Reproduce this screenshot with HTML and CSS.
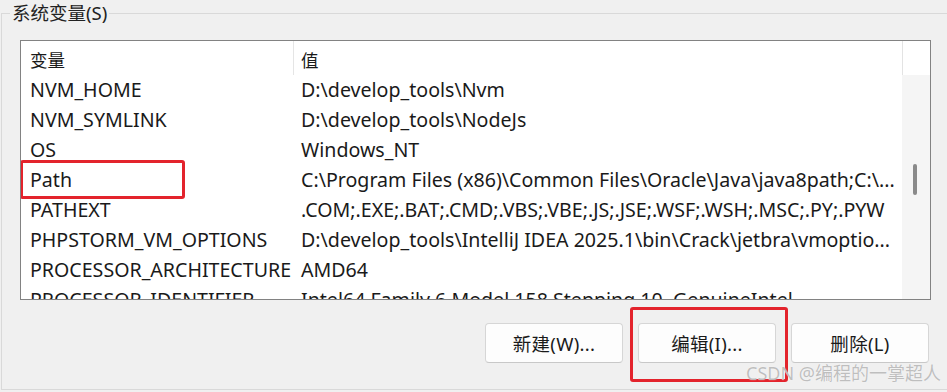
FILE: index.html
```
<!DOCTYPE html>
<html lang="zh-CN">
<head>
    <meta charset="UTF-8">
    <title>系统变量</title>
    <link rel="stylesheet" href="styles.css">
</head>
<body>
    <fieldset class="group">
        <legend>系统变量(S)</legend>

        <div class="listbox">
            <div class="rows">
                <div class="row head">
                    <div class="name">变量</div>
                    <div class="value">值</div>
                </div>
                <div class="row"><div class="name">NVM_HOME</div><div class="value">D:\develop_tools\Nvm</div></div>
                <div class="row"><div class="name">NVM_SYMLINK</div><div class="value">D:\develop_tools\NodeJs</div></div>
                <div class="row"><div class="name">OS</div><div class="value">Windows_NT</div></div>
                <div class="row marked">
                    <div class="name">Path</div>
                    <div class="value">C:\Program Files (x86)\Common Files\Oracle\Java\java8path;C:\...</div>
                    <span class="mark mark-path"></span>
                </div>
                <div class="row"><div class="name">PATHEXT</div><div class="value">.COM;.EXE;.BAT;.CMD;.VBS;.VBE;.JS;.JSE;.WSF;.WSH;.MSC;.PY;.PYW</div></div>
                <div class="row"><div class="name">PHPSTORM_VM_OPTIONS</div><div class="value">D:\develop_tools\IntelliJ IDEA 2025.1\bin\Crack\jetbra\vmoptio...</div></div>
                <div class="row"><div class="name">PROCESSOR_ARCHITECTURE</div><div class="value">AMD64</div></div>
                <div class="row"><div class="name">PROCESSOR_IDENTIFIER</div><div class="value">Intel64 Family 6 Model 158 Stepping 10, GenuineIntel</div></div>
            </div>
            <div class="scrollbar">
                <div class="scroll-head"></div>
                <div class="thumb"></div>
            </div>
        </div>

        <div class="actions">
            <button class="btn">新建(W)...</button>
            <span class="marked">
                <button class="btn">编辑(I)...</button>
                <span class="mark mark-btn"></span>
            </span>
            <button class="btn">删除(L)</button>
        </div>

        <div class="watermark">CSDN @编程的一掌超人</div>
    </fieldset>
</body>
</html>
```

FILE: styles.css
```
html, body {
    margin: 0;
    padding: 0;
    background-color: #f0f0f0;
    overflow: hidden;
}
body {
    font-family: "Noto Sans", "Noto Sans CJK SC", sans-serif;
    color: #1a1a1a;
    width: 947px;
    height: 392px;
}
.group {
    position: relative;
    box-sizing: border-box;
    margin: 0 0 0 1px;
    padding: 14px 0 0 18px;
    height: 390px;
    border: 1px solid #d9d9d9;
    border-right: none;
}
.group legend {
    margin-left: -10px;
    padding: 0 2px;
    font-size: 18.5px;
    line-height: 26px;
    color: #222;
}
.listbox {
    display: grid;
    grid-template-columns: 1fr 28px;
    width: 909px;
    height: 258px;
    border: 1px solid #828282;
    background-color: #fff;
    overflow: hidden;
}
.rows {
    overflow: hidden;
}
.row {
    position: relative;
    display: grid;
    grid-template-columns: 272px 1fr;
    height: 30px;
    line-height: 30px;
    font-size: 19.6px;
    white-space: nowrap;
}
.row .name {
    padding-left: 9px;
    overflow: hidden;
}
.row .value {
    padding-left: 8px;
    overflow: hidden;
}
.row.head {
    height: 34px;
    line-height: 38px;
    font-size: 17.5px;
}
.row.head .value {
    border-left: 1px solid #e5e5e5;
    padding-left: 7px;
}
.scrollbar {
    position: relative;
    background-color: #f5f5f5;
}
.scroll-head {
    height: 34px;
    border-left: 1px solid #e3e3e3;
    background-color: #fff;
}
.thumb {
    position: absolute;
    left: 11px;
    top: 123px;
    width: 4px;
    height: 31px;
    border-radius: 2px;
    background-color: #8a8a8a;
}
.actions {
    display: flex;
    justify-content: flex-end;
    gap: 15px;
    width: 909px;
    margin-top: 23px;
}
.btn {
    box-sizing: border-box;
    width: 138px;
    height: 40px;
    padding: 0;
    font-family: inherit;
    font-size: 18.5px;
    letter-spacing: 0.3px;
    color: #1a1a1a;
    background-color: #fdfdfd;
    border: 1px solid #d6d6d6;
    border-bottom-color: #c8c8c8;
    border-radius: 4px;
}
.marked {
    position: relative;
}
.actions .marked {
    display: flex;
}
.mark {
    position: absolute;
    box-sizing: border-box;
    border: 3px solid #e3232c;
    border-radius: 3px;
    pointer-events: none;
}
.mark-path {
    left: -1px;
    top: -5px;
    width: 165px;
    height: 39px;
}
.mark-btn {
    left: -8px;
    top: -16px;
    width: 158px;
    height: 75px;
}
.watermark {
    position: absolute;
    right: 6px;
    bottom: 4px;
    font-size: 18px;
    color: rgba(170, 170, 170, 0.75);
    text-shadow: 0 0 1px #fff;
}
```
